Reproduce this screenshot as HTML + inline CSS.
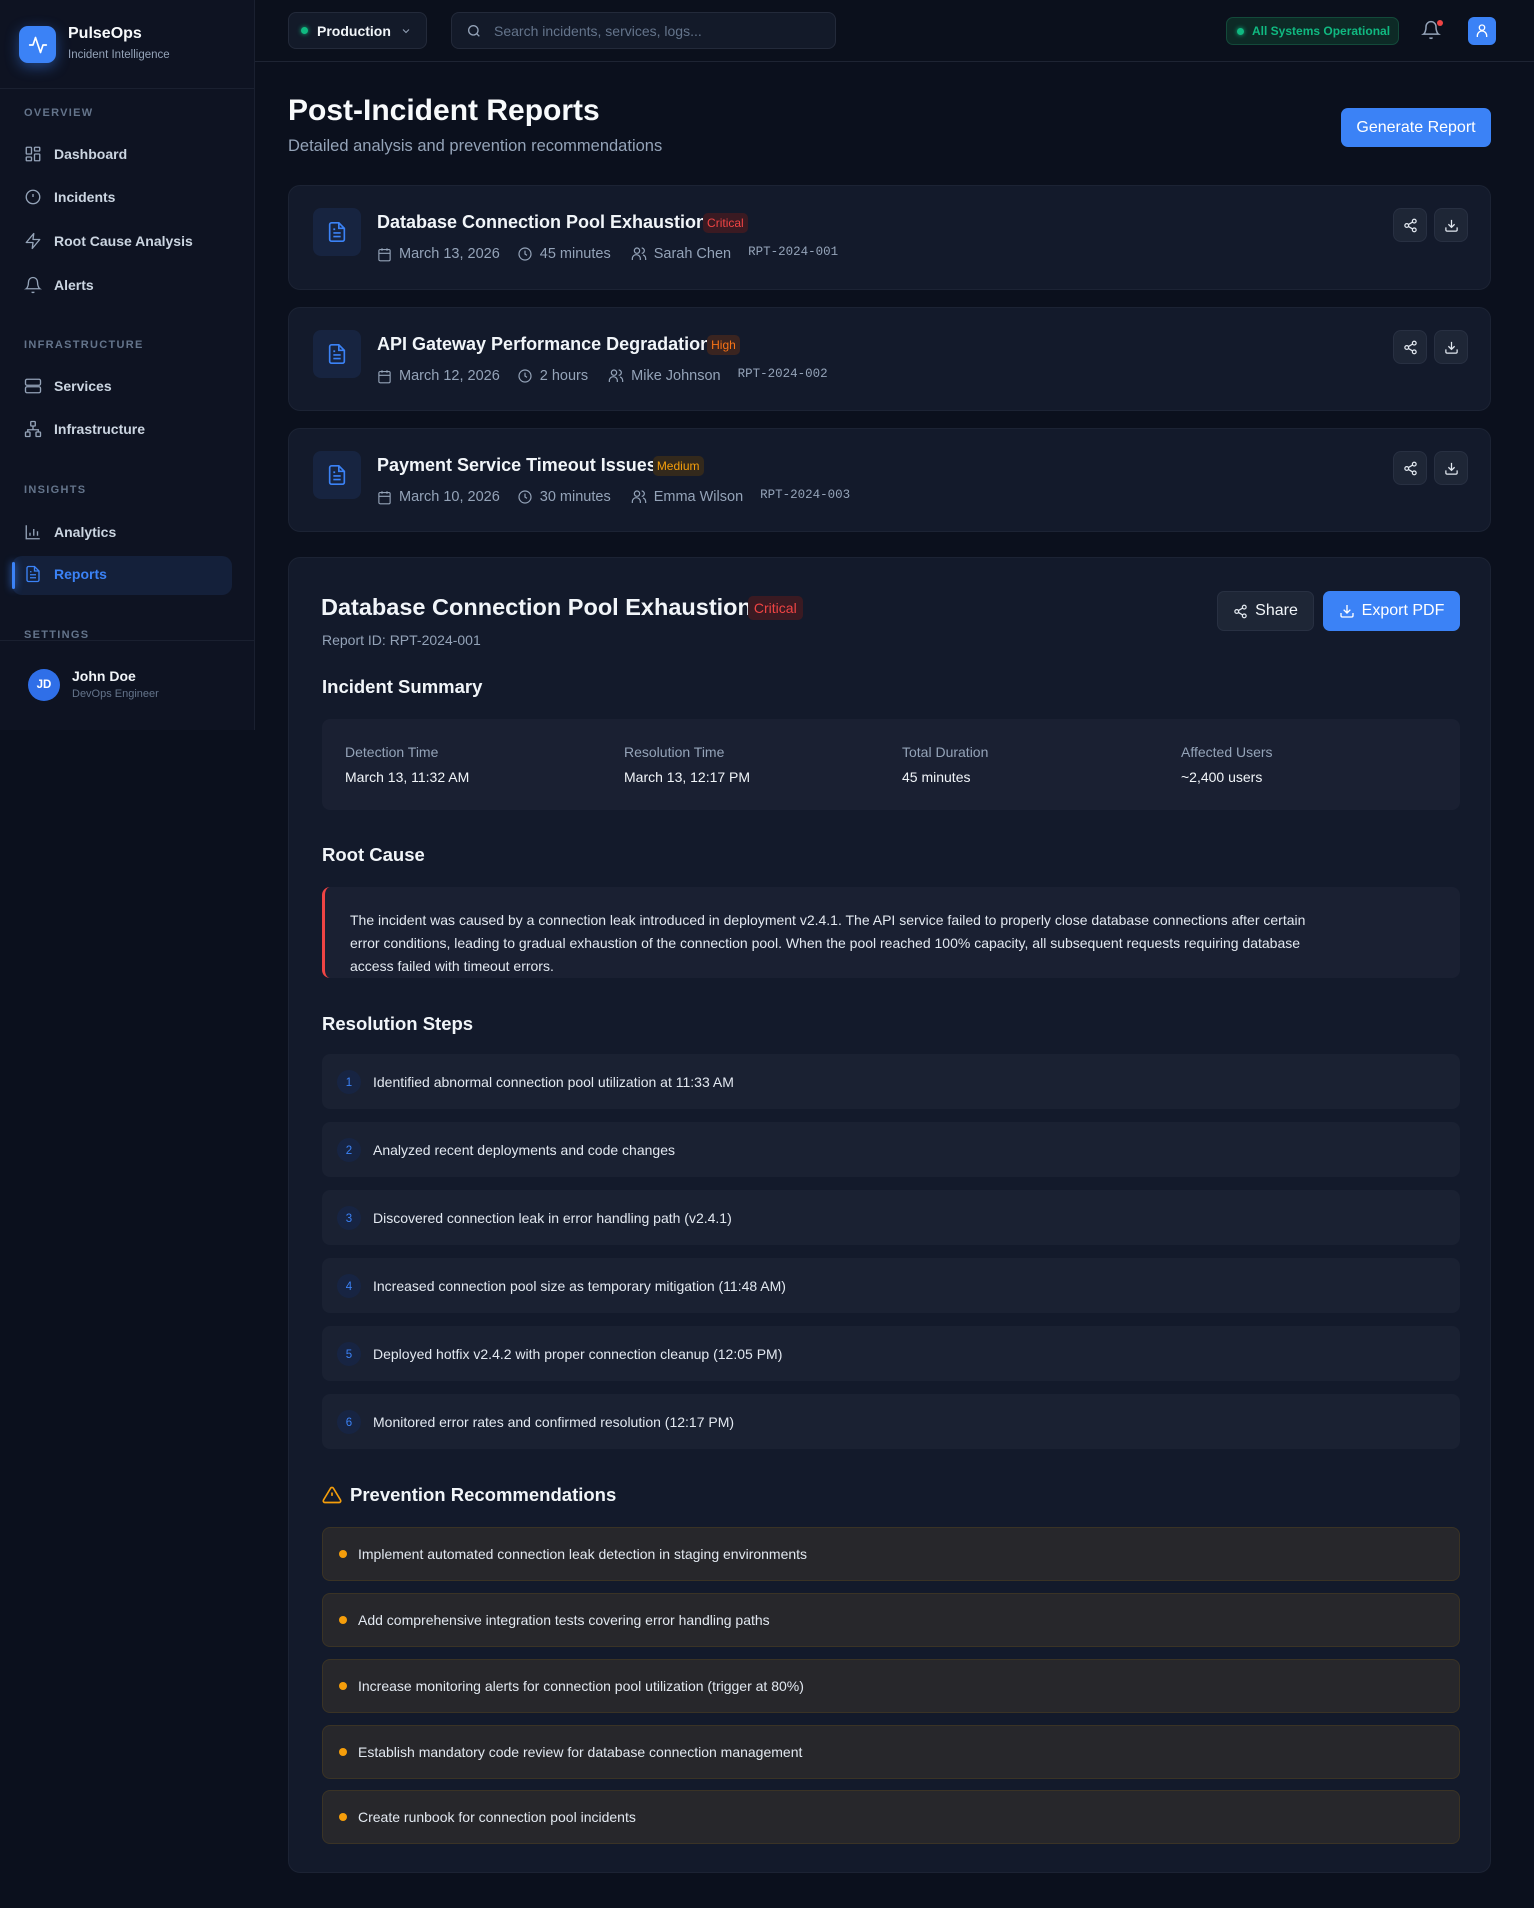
<!DOCTYPE html>
<html><head><meta charset="utf-8"><style>
*{box-sizing:border-box;margin:0;padding:0}
body{width:1534px;height:1908px;background:#0b101d;font-family:"Liberation Sans",sans-serif;color:#e5e7eb;position:relative;overflow:hidden}
.abs{position:absolute}
.side{position:absolute;left:0;top:0;width:255px;height:730px;background:#0e1322;border-right:1px solid #1a2030}
.logo{left:19px;top:26px;width:37px;height:37px;border-radius:9px;background:#3b82f6;box-shadow:0 4px 14px rgba(59,130,246,.45);display:flex;align-items:center;justify-content:center}
.sec{font-size:11px;letter-spacing:1.3px;color:#64748b;font-weight:bold;left:24px}
.nav{left:24px;display:flex;align-items:center;font-size:14px;color:#cbd5e1;font-weight:bold}
.nav svg{margin-right:12px}
.top{position:absolute;left:255px;top:0;right:0;height:62px;border-bottom:1px solid #1e2433;background:#0b101c}
.pill{border:1px solid #232a3a;background:#131a29;border-radius:8px}
.card{position:absolute;left:288px;width:1203px;background:#131a2b;border:1px solid #1c2334;border-radius:12px}
.ic{position:absolute;left:24px;top:22px;width:48px;height:48px;background:#172440;border-radius:8px;display:flex;align-items:center;justify-content:center}
.ctitle{position:absolute;left:88px;top:26px;font-size:18px;font-weight:bold;color:#f1f5f9;display:flex;align-items:center}
.badge{font-size:12px;padding:3px 4px;border-radius:5px;font-weight:normal;margin-left:-4px}
.meta{position:absolute;left:88px;top:60px;font-size:14.5px;color:#94a3b8;display:flex;align-items:center}
.meta svg{margin-right:7px}
.mono{font-family:"Liberation Mono",monospace;font-size:12.5px;color:#94a3b8}
.ib{position:absolute;top:22px;width:34px;height:34px;background:#1e2636;border:1px solid #283042;border-radius:8px;display:flex;align-items:center;justify-content:center}
h3{position:absolute;left:33px;font-size:18.5px;font-weight:bold;color:#f1f5f9}
.step{position:absolute;left:33px;width:1138px;height:55px;background:#1a2132;border-radius:8px;display:flex;align-items:center;font-size:14px;color:#e2e8f0}
.num{width:24px;height:24px;border-radius:50%;background:#172442;color:#3b82f6;font-size:11.5px;display:flex;align-items:center;justify-content:center;margin:0 12px 0 15px;line-height:24px;padding-top:2px}
.rec{position:absolute;left:33px;width:1138px;height:54px;background:#27272b;border:1px solid #3a3325;border-radius:8px;display:flex;align-items:center;font-size:14px;color:#e2e8f0}
.rec i{width:8px;height:8px;border-radius:50%;background:#f59e0b;margin:0 11px 0 16px}
.lab{font-size:14px;color:#94a3b8;position:absolute;top:25px}
.val{font-size:14px;color:#f1f5f9;position:absolute;top:50px}
</style></head><body>
<div class="side">
 <div class="abs logo"><svg width="20" height="20" viewBox="0 0 24 24" fill="none" stroke="#fff" stroke-width="2" stroke-linecap="round" stroke-linejoin="round"><path d="M22 12h-4l-3 9L9 3l-3 9H2"/></svg></div>
 <div class="abs" style="left:68px;top:25px;font-size:16px;font-weight:bold;color:#f8fafc">PulseOps</div>
 <div class="abs" style="left:68px;top:49px;font-size:11.5px;color:#94a3b8">Incident Intelligence</div>
 <div class="abs" style="left:0;top:88px;width:255px;border-top:1px solid #1a2030"></div>
 <div class="abs sec" style="top:107px">OVERVIEW</div>
 <div class="abs nav" style="top:145px"><svg width="18" height="18" viewBox="0 0 24 24" fill="none" stroke="#94a3b8" stroke-width="1.8"><rect x="3" y="3" width="7" height="9" rx="1"/><rect x="14" y="3" width="7" height="5" rx="1"/><rect x="14" y="12" width="7" height="9" rx="1"/><rect x="3" y="16" width="7" height="5" rx="1"/></svg>Dashboard</div>
 <div class="abs nav" style="top:188px"><svg width="18" height="18" viewBox="0 0 24 24" fill="none" stroke="#94a3b8" stroke-width="1.8"><circle cx="12" cy="12" r="9"/><path d="M12 8v4M12 16h.01"/></svg>Incidents</div>
 <div class="abs nav" style="top:232px"><svg width="18" height="18" viewBox="0 0 24 24" fill="none" stroke="#94a3b8" stroke-width="1.8" stroke-linejoin="round"><path d="M13 2L3 14h9l-1 8 10-12h-9l1-8z"/></svg>Root Cause Analysis</div>
 <div class="abs nav" style="top:276px"><svg width="18" height="18" viewBox="0 0 24 24" fill="none" stroke="#94a3b8" stroke-width="1.8"><path d="M6 8a6 6 0 0112 0c0 7 3 9 3 9H3s3-2 3-9M10.3 21a1.9 1.9 0 003.4 0"/></svg>Alerts</div>
 <div class="abs sec" style="top:339px">INFRASTRUCTURE</div>
 <div class="abs nav" style="top:377px"><svg width="18" height="18" viewBox="0 0 24 24" fill="none" stroke="#94a3b8" stroke-width="1.8"><rect x="2" y="3" width="20" height="8" rx="2"/><rect x="2" y="13" width="20" height="8" rx="2"/></svg>Services</div>
 <div class="abs nav" style="top:420px"><svg width="18" height="18" viewBox="0 0 24 24" fill="none" stroke="#94a3b8" stroke-width="1.8"><rect x="9" y="2" width="6" height="6" rx="1"/><rect x="2" y="16" width="6" height="6" rx="1"/><rect x="16" y="16" width="6" height="6" rx="1"/><path d="M5 16v-3h14v3M12 8v5"/></svg>Infrastructure</div>
 <div class="abs sec" style="top:484px">INSIGHTS</div>
 <div class="abs nav" style="top:523px"><svg width="18" height="18" viewBox="0 0 24 24" fill="none" stroke="#94a3b8" stroke-width="1.8"><path d="M3 3v18h18M8 17v-4M13 17V8M18 17v-6"/></svg>Analytics</div>
 <div class="abs" style="left:12px;top:556px;width:220px;height:39px;background:#14203a;border-radius:10px"></div>
 <div class="abs" style="left:12px;top:562px;width:3px;height:27px;background:#3b82f6;border-radius:2px;box-shadow:0 0 8px #3b82f6"></div>
 <div class="abs nav" style="top:565px;color:#3b82f6"><svg width="18" height="18" viewBox="0 0 24 24" fill="none" stroke="#3b82f6" stroke-width="1.8"><path d="M14 2H6a2 2 0 00-2 2v16a2 2 0 002 2h12a2 2 0 002-2V8z"/><path d="M14 2v6h6M8 13h8M8 17h8M8 9h2"/></svg>Reports</div>
 <div class="abs sec" style="top:629px">SETTINGS</div>
 <div class="abs" style="left:0;top:640px;width:255px;border-top:1px solid #1a2030"></div>
 <div class="abs" style="left:28px;top:669px;width:32px;height:32px;border-radius:50%;background:#2f6fe8;color:#fff;font-size:11.5px;font-weight:bold;display:flex;align-items:center;justify-content:center">JD</div>
 <div class="abs" style="left:72px;top:668px;font-size:14px;font-weight:bold;color:#f1f5f9">John Doe</div>
 <div class="abs" style="left:72px;top:688px;font-size:11px;color:#64748b">DevOps Engineer</div>
</div>

<div class="top">
 <div class="abs pill" style="left:33px;top:12px;width:139px;height:37px;display:flex;align-items:center;font-size:14px;font-weight:bold;color:#f1f5f9"><span style="width:7px;height:7px;border-radius:50%;background:#10b981;margin:0 9px 0 12px;box-shadow:0 0 5px #10b981"></span>Production<svg style="margin-left:9px" width="12" height="12" viewBox="0 0 24 24" fill="none" stroke="#94a3b8" stroke-width="2"><path d="M6 9l6 6 6-6"/></svg></div>
 <div class="abs pill" style="left:196px;top:12px;width:385px;height:37px;display:flex;align-items:center;font-size:14px;color:#64748b"><svg style="margin:0 12px 0 14px" width="16" height="16" viewBox="0 0 24 24" fill="none" stroke="#94a3b8" stroke-width="2"><circle cx="11" cy="11" r="7"/><path d="M20 20l-4-4"/></svg>Search incidents, services, logs...</div>
 <div class="abs" style="left:971px;top:17px;width:173px;height:28px;background:#0d2a26;border:1px solid #134a3a;border-radius:7px;display:flex;align-items:center;font-size:12px;font-weight:bold;color:#10b981"><span style="width:7px;height:7px;border-radius:50%;background:#10b981;margin:0 8px 0 10px;box-shadow:0 0 5px #10b981"></span>All Systems Operational</div>
 <svg class="abs" style="left:1166px;top:20px" width="20" height="20" viewBox="0 0 24 24" fill="none" stroke="#94a3b8" stroke-width="1.8"><path d="M6 8a6 6 0 0112 0c0 7 3 9 3 9H3s3-2 3-9M10.3 21a1.9 1.9 0 003.4 0"/></svg>
 <div class="abs" style="left:1182px;top:20px;width:6px;height:6px;border-radius:50%;background:#ef4444"></div>
 <div class="abs" style="left:1213px;top:17px;width:28px;height:28px;border-radius:6px;background:#3b82f6;display:flex;align-items:center;justify-content:center"><svg width="16" height="16" viewBox="0 0 24 24" fill="none" stroke="#fff" stroke-width="2"><circle cx="12" cy="7" r="4"/><path d="M5 21v-2a7 7 0 0114 0v2"/></svg></div>
</div>

<div class="abs" style="left:288px;top:94px;font-size:30px;font-weight:bold;color:#f8fafc">Post-Incident Reports</div>
<div class="abs" style="left:288px;top:137px;font-size:16.5px;color:#94a3b8">Detailed analysis and prevention recommendations</div>
<div class="abs" style="left:1341px;top:108px;width:150px;height:39px;background:#3b82f6;border-radius:7px;color:#fff;font-size:16px;display:flex;align-items:center;justify-content:center">Generate Report</div>

<div class="card" style="top:185px;height:105px">
 <div class="ic"><svg width="22" height="22" viewBox="0 0 24 24" fill="none" stroke="#3b82f6" stroke-width="1.8"><path d="M14 2H6a2 2 0 00-2 2v16a2 2 0 002 2h12a2 2 0 002-2V8z"/><path d="M14 2v6h6M8 13h8M8 17h8M8 9h2"/></svg></div>
 <div class="ctitle">Database Connection Pool Exhaustion<span class="badge" style="background:#3a1a22;color:#ef4444">Critical</span></div>
 <div class="meta"><svg width="15" height="15" viewBox="0 0 24 24" fill="none" stroke="#94a3b8" stroke-width="1.8"><rect x="3" y="4" width="18" height="18" rx="2"/><path d="M16 2v4M8 2v4M3 10h18"/></svg>March 13, 2026<svg style="margin-left:17px" width="16" height="16" viewBox="0 0 24 24" fill="none" stroke="#94a3b8" stroke-width="1.8"><circle cx="12" cy="12" r="9"/><path d="M12 7v5l3 2"/></svg>45 minutes<svg style="margin-left:20px" width="16" height="16" viewBox="0 0 24 24" fill="none" stroke="#94a3b8" stroke-width="1.8"><circle cx="9" cy="7" r="4"/><path d="M2 21v-2a6 6 0 0112 0v2M16 3a4 4 0 010 8M22 21v-2a6 6 0 00-4-5.6"/></svg>Sarah Chen<span class="mono" style="margin-left:17px;margin-top:-4px">RPT-2024-001</span></div>
 <div class="ib" style="left:1104px"><svg width="15" height="15" viewBox="0 0 24 24" fill="none" stroke="#e2e8f0" stroke-width="2"><circle cx="18" cy="5" r="3"/><circle cx="6" cy="12" r="3"/><circle cx="18" cy="19" r="3"/><path d="M8.6 13.5l6.8 4M15.4 6.5l-6.8 4"/></svg></div>
 <div class="ib" style="left:1145px"><svg width="15" height="15" viewBox="0 0 24 24" fill="none" stroke="#e2e8f0" stroke-width="2"><path d="M21 15v4a2 2 0 01-2 2H5a2 2 0 01-2-2v-4M7 10l5 5 5-5M12 15V3"/></svg></div>
</div>
<div class="card" style="top:307px;height:104px">
 <div class="ic"><svg width="22" height="22" viewBox="0 0 24 24" fill="none" stroke="#3b82f6" stroke-width="1.8"><path d="M14 2H6a2 2 0 00-2 2v16a2 2 0 002 2h12a2 2 0 002-2V8z"/><path d="M14 2v6h6M8 13h8M8 17h8M8 9h2"/></svg></div>
 <div class="ctitle">API Gateway Performance Degradation<span class="badge" style="background:#3a2420;color:#f97316">High</span></div>
 <div class="meta"><svg width="15" height="15" viewBox="0 0 24 24" fill="none" stroke="#94a3b8" stroke-width="1.8"><rect x="3" y="4" width="18" height="18" rx="2"/><path d="M16 2v4M8 2v4M3 10h18"/></svg>March 12, 2026<svg style="margin-left:17px" width="16" height="16" viewBox="0 0 24 24" fill="none" stroke="#94a3b8" stroke-width="1.8"><circle cx="12" cy="12" r="9"/><path d="M12 7v5l3 2"/></svg>2 hours<svg style="margin-left:20px" width="16" height="16" viewBox="0 0 24 24" fill="none" stroke="#94a3b8" stroke-width="1.8"><circle cx="9" cy="7" r="4"/><path d="M2 21v-2a6 6 0 0112 0v2M16 3a4 4 0 010 8M22 21v-2a6 6 0 00-4-5.6"/></svg>Mike Johnson<span class="mono" style="margin-left:17px;margin-top:-4px">RPT-2024-002</span></div>
 <div class="ib" style="left:1104px"><svg width="15" height="15" viewBox="0 0 24 24" fill="none" stroke="#e2e8f0" stroke-width="2"><circle cx="18" cy="5" r="3"/><circle cx="6" cy="12" r="3"/><circle cx="18" cy="19" r="3"/><path d="M8.6 13.5l6.8 4M15.4 6.5l-6.8 4"/></svg></div>
 <div class="ib" style="left:1145px"><svg width="15" height="15" viewBox="0 0 24 24" fill="none" stroke="#e2e8f0" stroke-width="2"><path d="M21 15v4a2 2 0 01-2 2H5a2 2 0 01-2-2v-4M7 10l5 5 5-5M12 15V3"/></svg></div>
</div>
<div class="card" style="top:428px;height:104px">
 <div class="ic"><svg width="22" height="22" viewBox="0 0 24 24" fill="none" stroke="#3b82f6" stroke-width="1.8"><path d="M14 2H6a2 2 0 00-2 2v16a2 2 0 002 2h12a2 2 0 002-2V8z"/><path d="M14 2v6h6M8 13h8M8 17h8M8 9h2"/></svg></div>
 <div class="ctitle">Payment Service Timeout Issues<span class="badge" style="background:#33291c;color:#f59e0b">Medium</span></div>
 <div class="meta"><svg width="15" height="15" viewBox="0 0 24 24" fill="none" stroke="#94a3b8" stroke-width="1.8"><rect x="3" y="4" width="18" height="18" rx="2"/><path d="M16 2v4M8 2v4M3 10h18"/></svg>March 10, 2026<svg style="margin-left:17px" width="16" height="16" viewBox="0 0 24 24" fill="none" stroke="#94a3b8" stroke-width="1.8"><circle cx="12" cy="12" r="9"/><path d="M12 7v5l3 2"/></svg>30 minutes<svg style="margin-left:20px" width="16" height="16" viewBox="0 0 24 24" fill="none" stroke="#94a3b8" stroke-width="1.8"><circle cx="9" cy="7" r="4"/><path d="M2 21v-2a6 6 0 0112 0v2M16 3a4 4 0 010 8M22 21v-2a6 6 0 00-4-5.6"/></svg>Emma Wilson<span class="mono" style="margin-left:17px;margin-top:-4px">RPT-2024-003</span></div>
 <div class="ib" style="left:1104px"><svg width="15" height="15" viewBox="0 0 24 24" fill="none" stroke="#e2e8f0" stroke-width="2"><circle cx="18" cy="5" r="3"/><circle cx="6" cy="12" r="3"/><circle cx="18" cy="19" r="3"/><path d="M8.6 13.5l6.8 4M15.4 6.5l-6.8 4"/></svg></div>
 <div class="ib" style="left:1145px"><svg width="15" height="15" viewBox="0 0 24 24" fill="none" stroke="#e2e8f0" stroke-width="2"><path d="M21 15v4a2 2 0 01-2 2H5a2 2 0 01-2-2v-4M7 10l5 5 5-5M12 15V3"/></svg></div>
</div>

<div class="card" style="top:557px;height:1316px">
 <div class="abs" style="left:32px;top:36px;font-size:23.5px;font-weight:bold;color:#f1f5f9;display:flex;align-items:center">Database Connection Pool Exhaustion<span class="badge" style="background:#3a1a22;color:#ef4444;font-size:14px;padding:4px 6px">Critical</span></div>
 <div class="abs" style="left:33px;top:74px;font-size:14px;color:#94a3b8">Report ID: RPT-2024-001</div>
 <div class="abs" style="left:928px;top:33px;width:97px;height:40px;background:#1e2636;border:1px solid #283042;border-radius:7px;display:flex;align-items:center;justify-content:center;font-size:16px;color:#f1f5f9"><svg style="margin-right:7px" width="15" height="15" viewBox="0 0 24 24" fill="none" stroke="#e2e8f0" stroke-width="2"><circle cx="18" cy="5" r="3"/><circle cx="6" cy="12" r="3"/><circle cx="18" cy="19" r="3"/><path d="M8.6 13.5l6.8 4M15.4 6.5l-6.8 4"/></svg>Share</div>
 <div class="abs" style="left:1034px;top:33px;width:137px;height:40px;background:#3b82f6;border-radius:7px;display:flex;align-items:center;justify-content:center;font-size:16px;color:#fff"><svg style="margin-right:7px" width="16" height="16" viewBox="0 0 24 24" fill="none" stroke="#fff" stroke-width="2"><path d="M21 15v4a2 2 0 01-2 2H5a2 2 0 01-2-2v-4M7 10l5 5 5-5M12 15V3"/></svg>Export PDF</div>
 <h3 style="top:118px">Incident Summary</h3>
 <div class="abs" style="left:33px;top:161px;width:1138px;height:91px;background:#1a2032;border-radius:8px">
  <div class="lab" style="left:23px">Detection Time</div><div class="val" style="left:23px">March 13, 11:32 AM</div>
  <div class="lab" style="left:302px">Resolution Time</div><div class="val" style="left:302px">March 13, 12:17 PM</div>
  <div class="lab" style="left:580px">Total Duration</div><div class="val" style="left:580px">45 minutes</div>
  <div class="lab" style="left:859px">Affected Users</div><div class="val" style="left:859px">~2,400 users</div>
 </div>
 <h3 style="top:286px">Root Cause</h3>
 <div class="abs" style="left:33px;top:329px;width:1138px;height:91px;background:#1a2032;border-radius:8px;border-left:3px solid #ef4444;padding:22px 20px 0 25px;font-size:14px;line-height:23px;color:#e2e8f0;white-space:nowrap">The incident was caused by a connection leak introduced in deployment v2.4.1. The API service failed to properly close database connections after certain<br>error conditions, leading to gradual exhaustion of the connection pool. When the pool reached 100% capacity, all subsequent requests requiring database<br>access failed with timeout errors.</div>
 <h3 style="top:455px">Resolution Steps</h3>
 <div class="step" style="top:496px"><span class="num">1</span>Identified abnormal connection pool utilization at 11:33 AM</div>
 <div class="step" style="top:564px"><span class="num">2</span>Analyzed recent deployments and code changes</div>
 <div class="step" style="top:632px"><span class="num">3</span>Discovered connection leak in error handling path (v2.4.1)</div>
 <div class="step" style="top:700px"><span class="num">4</span>Increased connection pool size as temporary mitigation (11:48 AM)</div>
 <div class="step" style="top:768px"><span class="num">5</span>Deployed hotfix v2.4.2 with proper connection cleanup (12:05 PM)</div>
 <div class="step" style="top:836px"><span class="num">6</span>Monitored error rates and confirmed resolution (12:17 PM)</div>
 <h3 style="top:926px;display:flex;align-items:center"><svg style="margin-right:8px" width="20" height="20" viewBox="0 0 24 24" fill="none" stroke="#f59e0b" stroke-width="2" stroke-linejoin="round"><path d="M10.3 3.9L1.8 18a2 2 0 001.7 3h17a2 2 0 001.7-3L13.7 3.9a2 2 0 00-3.4 0zM12 9v4M12 17h.01"/></svg>Prevention Recommendations</h3>
 <div class="rec" style="top:969px"><i></i>Implement automated connection leak detection in staging environments</div>
 <div class="rec" style="top:1035px"><i></i>Add comprehensive integration tests covering error handling paths</div>
 <div class="rec" style="top:1101px"><i></i>Increase monitoring alerts for connection pool utilization (trigger at 80%)</div>
 <div class="rec" style="top:1167px"><i></i>Establish mandatory code review for database connection management</div>
 <div class="rec" style="top:1232px"><i></i>Create runbook for connection pool incidents</div>
</div>
</body></html>
